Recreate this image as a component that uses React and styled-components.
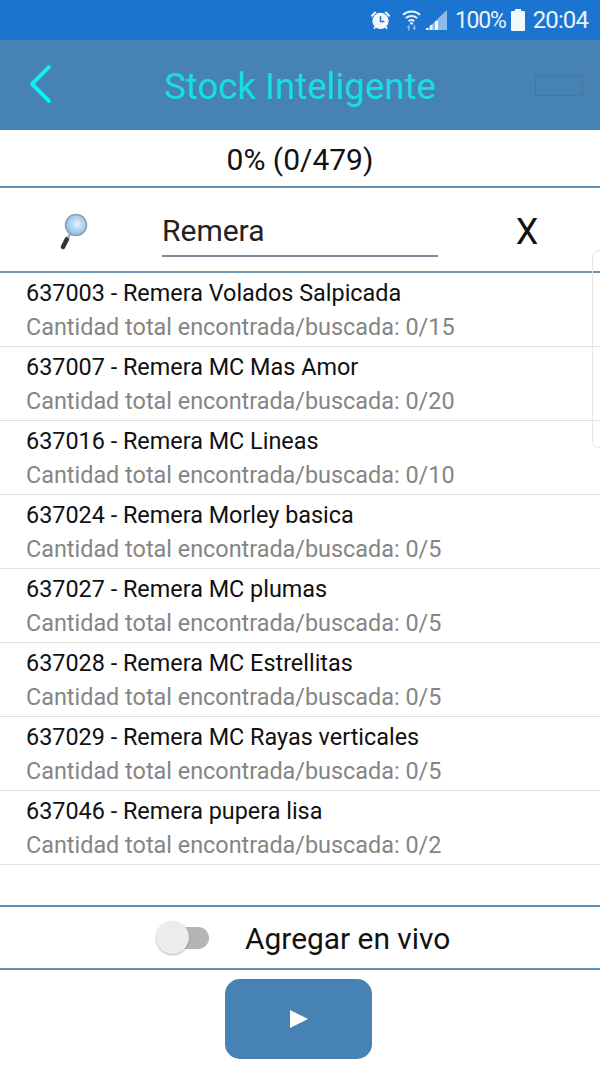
import React from "react";
import styled, { createGlobalStyle } from "styled-components";

const GlobalStyle = createGlobalStyle`
  html, body {
    margin: 0;
    padding: 0;
    background: #fff;
    font-family: Roboto, "Liberation Sans", sans-serif;
  }
`;

const Page = styled.div`
  position: relative;
  width: 600px;
  height: 1067px;
  overflow: hidden;
  display: flex;
  flex-direction: column;
  background: #fff;
`;

const StatusBar = styled.div`
  height: 40px;
  background: #1b75d0;
  color: #e8f2fb;
  display: flex;
  align-items: center;
  justify-content: flex-end;
  padding-right: 12px;
  font-size: 24px;
  box-sizing: border-box;
`;

const StatusIcons = styled.div`
  display: flex;
  align-items: center;
  margin-right: 8px;
`;

const AlarmSlot = styled.div`
  display: flex;
  margin-right: 11px;
`;

const WifiSlot = styled.div`
  display: flex;
  margin-right: 4px;
`;

const BatteryText = styled.span`
  font-size: 23px;
  letter-spacing: -1.2px;
  margin-right: 5px;
`;

const Clock = styled.span`
  margin-left: 8px;
  letter-spacing: -0.9px;
`;

const Header = styled.div`
  height: 90px;
  background: #4682b4;
  display: flex;
  align-items: center;
  justify-content: center;
  position: relative;
`;

const Title = styled.div`
  color: #14dfe2;
  font-size: 36.6px;
  margin-top: 2px;
`;

const BackButton = styled.div`
  position: absolute;
  left: 28px;
  top: 24px;
  width: 26px;
  height: 40px;
`;

const HeaderBattery = styled.div`
  position: absolute;
  left: 535px;
  top: 35px;
  width: 48px;
  height: 21px;
  border: 1px solid #4d7699;
  box-sizing: border-box;
`;

const Progress = styled.div`
  height: 58px;
  box-sizing: border-box;
  border-bottom: 2px solid #5f8fb5;
  display: flex;
  align-items: center;
  justify-content: center;
  font-size: 30px;
  color: #111;
  padding-top: 3px;
`;

const SearchRow = styled.div`
  height: 85px;
  box-sizing: border-box;
  border-bottom: 2px solid #6f94b3;
  display: flex;
  align-items: center;
  position: relative;
`;

const SearchIconBox = styled.div`
  width: 162px;
  padding-left: 58px;
  box-sizing: border-box;
  display: flex;
  align-items: center;
  margin-top: 5px;
`;

const SearchField = styled.div`
  width: 276px;
  height: 55px;
  box-sizing: border-box;
  border-bottom: 2px solid #7d8a96;
  font-size: 30px;
  color: #222;
  display: flex;
  align-items: center;
  padding-top: 4px;
`;

const ClearButton = styled.div`
  flex: 1;
  text-align: center;
  font-size: 36px;
  color: #111;
  padding: 5px 0 0 16px;
`;

const List = styled.div`
  display: flex;
  flex-direction: column;
`;

const Row = styled.div`
  height: 74px;
  box-sizing: border-box;
  border-bottom: 1px solid #e0e0e0;
  padding: 6px 0 0 26px;
`;

const RowTitle = styled.div`
  font-size: 23.4px;
  line-height: 28px;
  color: #111;
`;

const RowSub = styled.div`
  font-size: 23.4px;
  line-height: 28px;
  margin-top: 6px;
  color: #858585;
`;

const LiveRow = styled.div`
  margin-top: 40px;
  height: 65px;
  box-sizing: border-box;
  border-top: 2px solid #5f8fb5;
  border-bottom: 2px solid #5f8fb5;
  display: flex;
  align-items: center;
  padding-left: 156px;
`;

const ToggleTrack = styled.div`
  position: relative;
  width: 50px;
  height: 22px;
  margin-left: 3px;
  border-radius: 11px;
  background: #b5b5b5;
`;

const ToggleKnob = styled.div`
  position: absolute;
  left: -3px;
  top: -6px;
  width: 33px;
  height: 33px;
  border-radius: 50%;
  background: #ececec;
  box-shadow: 0 1px 2px rgba(0, 0, 0, 0.3);
`;

const LiveLabel = styled.div`
  margin-left: 36px;
  padding-top: 2px;
  font-size: 29.9px;
  color: #111;
`;

const Footer = styled.div`
  display: flex;
  justify-content: center;
  padding: 9px 4px 0 0;
`;

const PlayButton = styled.div`
  width: 147px;
  height: 80px;
  background: #4682b4;
  border-radius: 15px;
  display: flex;
  align-items: center;
  justify-content: center;
  padding-left: 2px;
  box-sizing: border-box;
`;

const EdgeHandle = styled.div`
  position: absolute;
  right: -6px;
  top: 250px;
  width: 12px;
  height: 196px;
  border: 1px solid #e6e6e6;
  border-radius: 8px;
  background: transparent;
`;

const items = [
  ["637003 - Remera Volados Salpicada", "0/15"],
  ["637007 - Remera MC Mas Amor", "0/20"],
  ["637016 - Remera MC Lineas", "0/10"],
  ["637024 - Remera Morley basica", "0/5"],
  ["637027 - Remera MC plumas", "0/5"],
  ["637028 - Remera MC Estrellitas", "0/5"],
  ["637029 - Remera MC Rayas verticales", "0/5"],
  ["637046 - Remera pupera lisa", "0/2"],
];

function AlarmIcon() {
  return (
    <svg width="21" height="22" viewBox="0 0 22 22">
      <circle cx="11" cy="12" r="8.5" fill="#f2f7fc" />
      <path d="M11 7v5.500h4" fill="none" stroke="#1b75d0" strokeWidth="1.6" />
      <path d="M1 6l4-4 2 1-5 5zM21 6l-4-4-2 1 5 5z" fill="#f2f7fc" />
      <path d="M4 20l2-2M18 20l-2-2" stroke="#f2f7fc" strokeWidth="2" />
    </svg>
  );
}

function WifiIcon() {
  return (
    <svg width="19" height="24" viewBox="0 0 20 24">
      <g fill="none" stroke="#e8f2fb" strokeWidth="2">
        <path d="M1 6.500c5-4.600 13-4.600 18 0" />
        <path d="M4 10c3.400-3 8.600-3 12 0" />
        <path d="M7 13.200c1.800-1.400 4.200-1.400 6 0" />
      </g>
      <circle cx="10" cy="15.500" r="1.500" fill="#e8f2fb" />
      <path d="M7 17l-2 3h1.300v3h1.400v-3H9zM13 23l2-3h-1.300v-3h-1.400v3H11z" fill="#8fbbe8" />
    </svg>
  );
}

function SignalIcon() {
  return (
    <svg width="22" height="22" viewBox="0 0 22 22">
      <path d="M22 1v20H1z" fill="#8fbbe8" />
      <path d="M1 21h2v-2H1zM5 21h2.500v-5H5zM10 21h3v-9h-3z" fill="#f2f7fc" />
    </svg>
  );
}

function BatteryIcon() {
  return (
    <svg width="14" height="22" viewBox="0 0 14 22">
      <path d="M4 0h6v2h3a1 1 0 0 1 1 1v18a1 1 0 0 1-1 1H1a1 1 0 0 1-1-1V3a1 1 0 0 1 1-1h3z" fill="#f2f7fc" />
    </svg>
  );
}

function MagnifierIcon() {
  return (
    <svg width="32" height="38" viewBox="0 0 32 38">
      <defs>
        <radialGradient id="lens" cx="55%" cy="45%" r="60%">
          <stop offset="0%" stopColor="#e6f3fd" />
          <stop offset="100%" stopColor="#7fb8ea" />
        </radialGradient>
      </defs>
      <path d="M9 26L5 34" stroke="#333" strokeWidth="4.500" strokeLinecap="round" />
      <path d="M12 21L10 25" stroke="#aaa" strokeWidth="2.500" />
      <circle cx="18" cy="12" r="10.500" fill="url(#lens)" stroke="#8fa3b8" strokeWidth="1.600" />
    </svg>
  );
}

export default function App() {
  return (
    <Page>
      <GlobalStyle />
      <StatusBar>
        <StatusIcons>
          <AlarmSlot>
            <AlarmIcon />
          </AlarmSlot>
          <WifiSlot>
            <WifiIcon />
          </WifiSlot>
          <SignalIcon />
        </StatusIcons>
        <BatteryText>100%</BatteryText>
        <BatteryIcon />
        <Clock>20:04</Clock>
      </StatusBar>
      <Header>
        <BackButton>
          <svg width="26" height="40" viewBox="0 0 26 40">
            <path d="M21 3L4 20l17 17" fill="none" stroke="#0bf0f0" strokeWidth="4" strokeLinecap="round" strokeLinejoin="round" />
          </svg>
        </BackButton>
        <Title>Stock Inteligente</Title>
        <HeaderBattery />
      </Header>
      <Progress>0% (0/479)</Progress>
      <SearchRow>
        <SearchIconBox>
          <MagnifierIcon />
        </SearchIconBox>
        <SearchField>Remera</SearchField>
        <ClearButton>X</ClearButton>
      </SearchRow>
      <List>
        {items.map(([name, count]) => (
          <Row key={name}>
            <RowTitle>{name}</RowTitle>
            <RowSub>Cantidad total encontrada/buscada: {count}</RowSub>
          </Row>
        ))}
      </List>
      <LiveRow>
        <ToggleTrack>
          <ToggleKnob />
        </ToggleTrack>
        <LiveLabel>Agregar en vivo</LiveLabel>
      </LiveRow>
      <Footer>
        <PlayButton>
          <svg width="20" height="20" viewBox="0 0 20 20">
            <path d="M1 1l18 9-18 9z" fill="#fff" />
          </svg>
        </PlayButton>
      </Footer>
      <EdgeHandle />
    </Page>
  );
}
